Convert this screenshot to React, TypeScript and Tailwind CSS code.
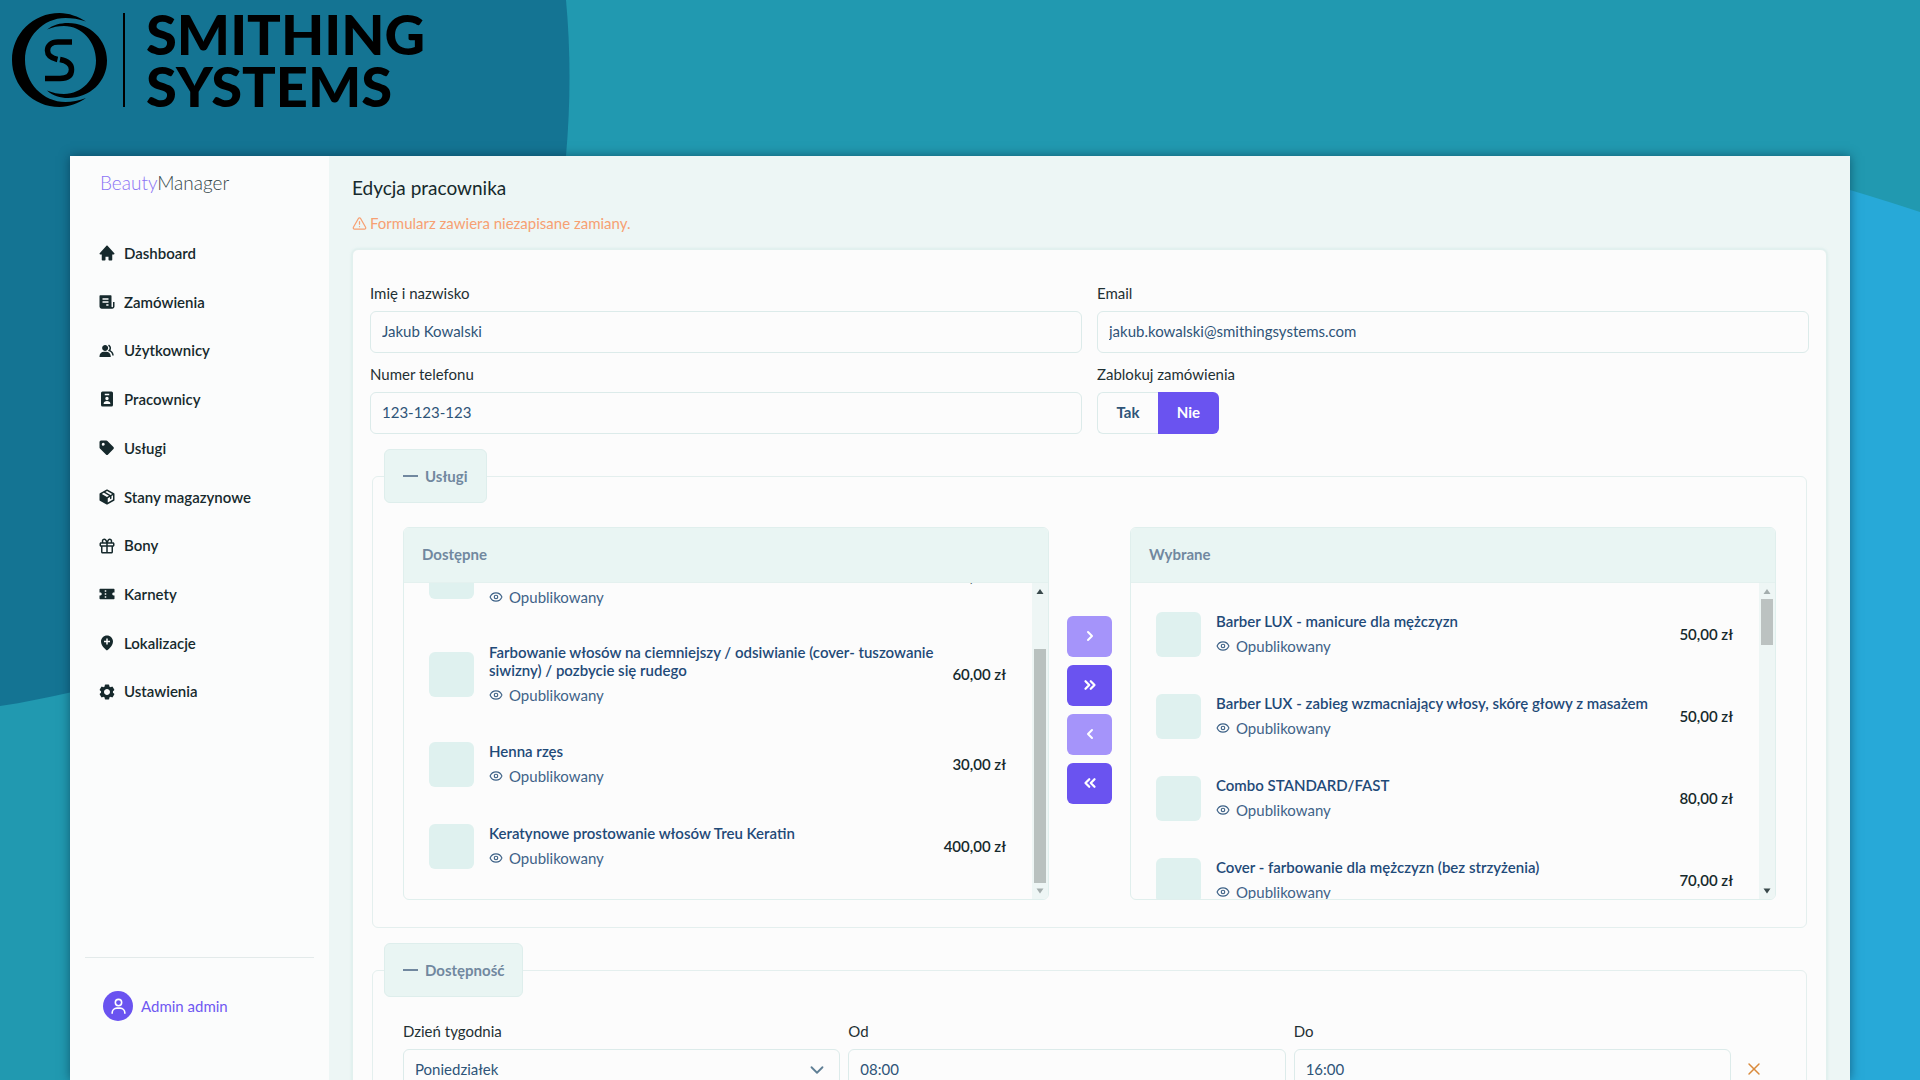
import { useState } from "react";
import type { ReactNode } from "react";
import type { IconType } from "react-icons";
import {
  BiGift,
  BiSolidCog,
  BiSolidCoupon,
  BiSolidGroup,
  BiSolidHome,
  BiSolidLocationPlus,
  BiSolidPackage,
  BiSolidPurchaseTag,
  BiSolidReceipt,
  BiSolidUserBadge,
  BiUser,
} from "react-icons/bi";
import {
  ChevronDown,
  ChevronLeft,
  ChevronRight,
  ChevronsLeft,
  ChevronsRight,
  Eye,
  TriangleAlert,
  X,
} from "lucide-react";

const NAV: { label: string; icon: IconType }[] = [
  { label: "Dashboard", icon: BiSolidHome },
  { label: "Zamówienia", icon: BiSolidReceipt },
  { label: "Użytkownicy", icon: BiSolidGroup },
  { label: "Pracownicy", icon: BiSolidUserBadge },
  { label: "Usługi", icon: BiSolidPurchaseTag },
  { label: "Stany magazynowe", icon: BiSolidPackage },
  { label: "Bony", icon: BiGift },
  { label: "Karnety", icon: BiSolidCoupon },
  { label: "Lokalizacje", icon: BiSolidLocationPlus },
  { label: "Ustawienia", icon: BiSolidCog },
];

type Service = { name: string; price: string };

const AVAILABLE: Service[] = [
  {
    name: "Farbowanie włosów na ciemniejszy / odsiwianie (cover- tuszowanie siwizny)",
    price: "60,00 zł",
  },
  {
    name: "Farbowanie włosów na ciemniejszy / odsiwianie (cover- tuszowanie siwizny) / pozbycie się rudego",
    price: "60,00 zł",
  },
  { name: "Henna rzęs", price: "30,00 zł" },
  { name: "Keratynowe prostowanie włosów Treu Keratin", price: "400,00 zł" },
];

const SELECTED: Service[] = [
  { name: "Barber LUX - manicure dla mężczyzn", price: "50,00 zł" },
  { name: "Barber LUX - zabieg wzmacniający włosy, skórę głowy z masażem", price: "50,00 zł" },
  { name: "Combo STANDARD/FAST", price: "80,00 zł" },
  { name: "Cover - farbowanie dla mężczyzn (bez strzyżenia)", price: "70,00 zł" },
];

const inputClass =
  "h-[42px] w-full rounded-md border border-[#dcebea] bg-[#fcfcfc] px-[11px] pb-[2px] text-[15px] text-[#2f5478] outline-none";
const labelClass = "mb-2 block text-[15px] leading-5 text-[#1f3033]";

function Backdrop() {
  return (
    <svg
      className="absolute inset-0 h-full w-full"
      viewBox="0 0 1920 1080"
      preserveAspectRatio="none"
      aria-hidden="true"
    >
      <rect width="1920" height="1080" fill="#2199b0" />
      <path d="M0 0H566Q573 76 566 156C540 440 330 655 0 706Z" fill="#147493" />
      <path d="M1700 160Q1800 172 1850 190Q1890 202 1920 212V1080H1700Z" fill="#27a9d8" />
    </svg>
  );
}

function BrandLogo() {
  return (
    <div className="relative flex h-[156px] items-start pt-[13px] pl-3 text-black">
      <svg viewBox="12 13 95 94" className="h-[94px] w-[95px]" aria-hidden="true">
        <path
          d="M86 21.500C78 16.500 69 13 59.500 13C33 13 12 34 12 60S33 107 59.500 107C69 107 78 103.500 86 98C79 100.800 72 102 65.500 102C43 102 25 83 25 60S43 18 65.500 18C72 18 79 19 86 21.500Z"
          fill="currentColor"
        />
        <path
          d="M47 29.500C53 25 60 23 68 23C90 23 107 39.500 107 60.500S90 98 68 98C60 98 53 96 47 90.500C53 93 58 94 64 94C82 94 96 79 96 60.500S82 26 64 26C58 26 53 27 47 29.500Z"
          fill="currentColor"
        />
        <path
          d="M72 42H58C51 42 47.500 46 47.500 50.500C47.500 55 51 58 57.500 59.500M60 59.500C68 61 71.500 65 71.500 69.500C71.500 75 68 78.500 60 78.500H45"
          fill="none"
          stroke="currentColor"
          strokeWidth="5.500"
        />
      </svg>
      <div className="ml-4 h-[94px] w-[2px] bg-black" />
      <div className="-mt-[5px] ml-[21px] text-[56px] leading-[52px] font-black">
        SMITHING
        <br />
        SYSTEMS
      </div>
    </div>
  );
}

function Sidebar() {
  return (
    <aside className="flex w-[259px] shrink-0 flex-col bg-[#fbfcfc] pb-[59px]">
      <div className="mt-[14px] pl-[30px] text-[19px] leading-[26px] font-light text-[#33474a]">
        <span className="text-[#8b73f5]">Beauty</span>Manager
      </div>
      <nav className="mt-[33px]">
        <ul className="grid h-[487px] auto-rows-fr">
          {NAV.map(({ label, icon: Icon }) => (
            <li key={label} className="flex">
              <a
                href="#"
                className="flex w-full items-center gap-2 pl-7 text-[15px] font-semibold text-[#16292c]"
              >
                <Icon size={18} />
                {label}
              </a>
            </li>
          ))}
        </ul>
      </nav>
      <hr className="mx-[15px] mt-auto border-[#e3eaea]" />
      <a href="#" className="mt-[33px] flex items-center gap-2 pl-[33px] text-[15px] text-[#6f58f2]">
        <span className="flex size-[30px] items-center justify-center rounded-full bg-[#6a53f0] text-white">
          <BiUser size={19} />
        </span>
        Admin admin
      </a>
    </aside>
  );
}

function TextField({ id, label, value, type = "text" }: { id: string; label: string; value: string; type?: string }) {
  return (
    <div className="min-w-0">
      <label htmlFor={id} className={labelClass}>
        {label}
      </label>
      <input id={id} type={type} defaultValue={value} className={inputClass} />
    </div>
  );
}

function Section({ title, children }: { title: string; children: ReactNode }) {
  return (
    <fieldset className="mx-[2px] min-w-0 rounded-md border border-[#e4efee] px-[30px] pt-6 pb-[27px]">
      <legend className="-ml-[19px]">
        <button
          type="button"
          className="flex h-[54px] items-center gap-[7px] rounded-md border border-[#deeeec] bg-[#e9f5f3] px-[18px] text-[15px] font-bold text-[#71889f]"
        >
          <span className="h-[2px] w-[15px] bg-current" />
          {title}
        </button>
      </legend>
      {children}
    </fieldset>
  );
}

function ServiceRow({ name, price }: Service) {
  return (
    <li className="flex min-h-[82px] shrink-0 items-center gap-[15px] py-[18px]">
      <span className="size-[45px] shrink-0 rounded-md bg-[#dff1ef]" />
      <div className="min-w-0 flex-1">
        <div className="text-[15px] leading-[18px] font-semibold text-[#1f4a78]">{name}</div>
        <div className="mt-[6px] flex items-center gap-[6px] text-[15px] leading-5 text-[#3f6388]">
          <Eye size={14} />
          Opublikowany
        </div>
      </div>
      <span className="shrink-0 text-[15px] font-semibold text-[#16292c]">{price}</span>
    </li>
  );
}

function ScrollRail({ atEnd }: { atEnd: boolean }) {
  return (
    <div className="flex w-[16px] shrink-0 flex-col items-center bg-[#eef6f5]" aria-hidden="true">
      <svg viewBox="0 0 16 16" className={atEnd ? "size-4 text-[#39494b]" : "size-4 text-[#a3adad]"}>
        <path d="M8 6L11.500 11H4.500Z" fill="currentColor" />
      </svg>
      {atEnd && <div className="h-[50px]" />}
      <div className={atEnd ? "w-3 flex-1 bg-[#b9c1bf]" : "h-[46px] w-3 bg-[#bcc2c1]"} />
      {!atEnd && <div className="flex-1" />}
      <svg viewBox="0 0 16 16" className={atEnd ? "size-4 text-[#a3adad]" : "size-4 text-[#39494b]"}>
        <path d="M8 10.500L11.500 5.500H4.500Z" fill="currentColor" />
      </svg>
    </div>
  );
}

function PickPanel({ title, items, atEnd }: { title: string; items: Service[]; atEnd: boolean }) {
  return (
    <section className="flex h-[373px] min-w-0 flex-col overflow-hidden rounded-md border border-[#e0efed] bg-[#fcfcfc]">
      <h2 className="flex h-[55px] shrink-0 items-center border-b border-[#e4f1ef] bg-[#e9f5f3] px-[18px] pb-[2px] text-[15px] font-bold text-[#71889f]">
        {title}
      </h2>
      <div className="flex min-h-0 flex-1">
        <ul
          className={
            atEnd
              ? "flex min-w-0 flex-1 flex-col justify-end overflow-hidden pr-[26px] pb-3 pl-[25px]"
              : "flex min-w-0 flex-1 flex-col overflow-hidden pt-[10px] pr-[26px] pl-[25px]"
          }
        >
          {items.map((s) => (
            <ServiceRow key={s.name} {...s} />
          ))}
        </ul>
        <ScrollRail atEnd={atEnd} />
      </div>
    </section>
  );
}

function MoveButton({ label, muted, children }: { label: string; muted?: boolean; children: ReactNode }) {
  return (
    <button
      type="button"
      aria-label={label}
      className={
        muted
          ? "flex h-[41px] w-[45px] items-center justify-center rounded-md bg-[#a594fa] text-white"
          : "flex h-[41px] w-[45px] items-center justify-center rounded-md bg-[#6a53f0] text-white"
      }
    >
      {children}
    </button>
  );
}

export default function App() {
  const [blocked, setBlocked] = useState(false);
  return (
    <div className="relative flex h-screen flex-col overflow-hidden font-['Lato',sans-serif]">
      <Backdrop />
      <BrandLogo />
      <div className="relative mx-[70px] flex min-h-0 flex-1 shadow-[0_0_10px_rgba(0,30,50,0.5)]">
        <Sidebar />
        <main className="min-w-0 flex-1 overflow-hidden bg-[#edf6f5] px-[23px] pt-[19px]">
          <h1 className="text-[19px] leading-[26px] text-[#16292c]">Edycja pracownika</h1>
          <p className="mt-3 flex items-center gap-[3px] text-[15px] leading-5 text-[#f7a072]">
            <TriangleAlert size={15} strokeWidth={2} />
            Formularz zawiera niezapisane zamiany.
          </p>
          <form className="mt-4 rounded-md border border-[#e2f0ee] bg-[#fcfcfc] px-[17px] pt-[33px] shadow-[0_0_3px_rgba(120,190,185,0.25)]">
            <div className="grid grid-cols-2 gap-x-[15px] gap-y-[11px]">
              <TextField id="name" label="Imię i nazwisko" value="Jakub Kowalski" />
              <TextField id="email" label="Email" type="email" value="jakub.kowalski@smithingsystems.com" />
              <TextField id="phone" label="Numer telefonu" type="tel" value="123-123-123" />
              <div>
                <span id="block-label" className={labelClass}>
                  Zablokuj zamówienia
                </span>
                <div role="group" aria-labelledby="block-label" className="flex h-[42px] text-[15px] font-bold">
                  <button
                    type="button"
                    aria-pressed={blocked}
                    onClick={() => setBlocked(true)}
                    className={
                      blocked
                        ? "w-[61px] rounded-l-md bg-[#6a53f0] pb-[2px] text-white"
                        : "w-[61px] rounded-l-md border border-r-0 border-[#dcebea] pb-[2px] text-[#2f5478]"
                    }
                  >
                    Tak
                  </button>
                  <button
                    type="button"
                    aria-pressed={!blocked}
                    onClick={() => setBlocked(false)}
                    className={
                      blocked
                        ? "w-[61px] rounded-r-md border border-l-0 border-[#dcebea] pb-[2px] text-[#2f5478]"
                        : "w-[61px] rounded-r-md bg-[#6a53f0] pb-[2px] text-white"
                    }
                  >
                    Nie
                  </button>
                </div>
              </div>
            </div>

            <div className="mt-[15px] flex flex-col gap-[15px]">
              <Section title="Usługi">
                <div className="grid grid-cols-[1fr_auto_1fr] gap-[18px]">
                  <PickPanel title="Dostępne" items={AVAILABLE} atEnd />
                  <div className="flex flex-col justify-center gap-2 pb-2">
                    <MoveButton label="Dodaj zaznaczone" muted>
                      <ChevronRight size={16} strokeWidth={3} />
                    </MoveButton>
                    <MoveButton label="Dodaj wszystkie">
                      <ChevronsRight size={18} strokeWidth={3} />
                    </MoveButton>
                    <MoveButton label="Usuń zaznaczone" muted>
                      <ChevronLeft size={16} strokeWidth={3} />
                    </MoveButton>
                    <MoveButton label="Usuń wszystkie">
                      <ChevronsLeft size={18} strokeWidth={3} />
                    </MoveButton>
                  </div>
                  <PickPanel title="Wybrane" items={SELECTED} atEnd={false} />
                </div>
              </Section>

              <Section title="Dostępność">
                <div className="grid grid-cols-[1fr_1fr_1fr_37px] items-end gap-x-2">
                  <div className="min-w-0">
                    <label htmlFor="day" className={labelClass}>
                      Dzień tygodnia
                    </label>
                    <div className="relative">
                      <select
                        id="day"
                        defaultValue="Poniedziałek"
                        className="h-[42px] w-full appearance-none rounded-md border border-[#dcebea] bg-[#fcfcfc] px-[11px] pb-[2px] text-[15px] text-[#2f5478] outline-none"
                      >
                        <option>Poniedziałek</option>
                      </select>
                      <ChevronDown
                        size={22}
                        strokeWidth={2}
                        className="pointer-events-none absolute top-[10px] right-3 text-[#5f7f95]"
                      />
                    </div>
                  </div>
                  <TextField id="from" label="Od" value="08:00" />
                  <TextField id="to" label="Do" value="16:00" />
                  <button
                    type="button"
                    aria-label="Usuń termin"
                    className="flex h-[42px] w-[30px] items-center justify-center pb-[2px] text-[#d98a3c]"
                  >
                    <X size={20} strokeWidth={1.75} />
                  </button>
                </div>
              </Section>
            </div>
          </form>
        </main>
      </div>
    </div>
  );
}
